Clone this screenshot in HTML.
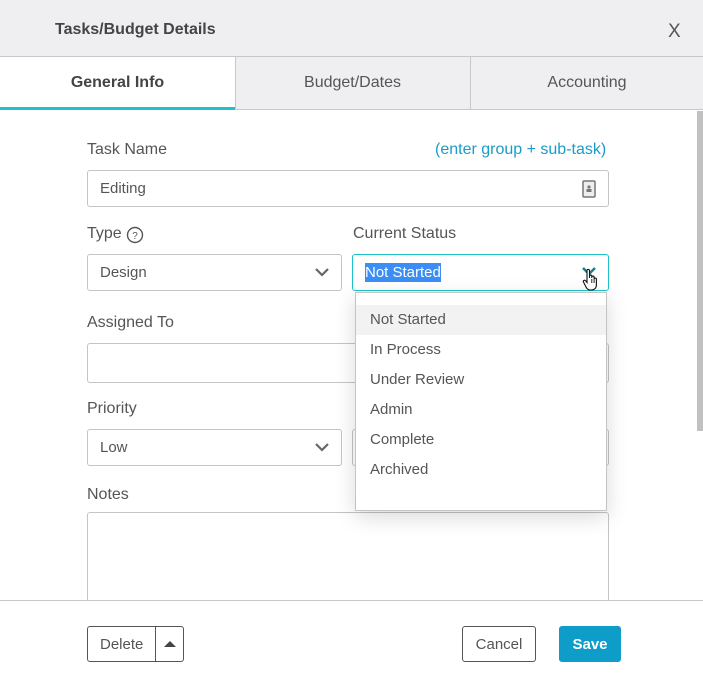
<!DOCTYPE html>
<html><head><style>
*{box-sizing:border-box;margin:0;padding:0}
body{width:703px;height:683px;position:relative;overflow:hidden;background:#fff;font-family:"Liberation Sans",sans-serif;color:#555}
.a{position:absolute}
.lbl{font-size:16px;color:#555}
.box{position:absolute;border:1px solid #c4c4c4;border-radius:3px;background:#fff;font-size:15px;color:#555;padding-left:12px;display:flex;align-items:center}
.chev{position:absolute;right:12px;top:50%;margin-top:-6px}
.item{position:absolute;left:0;width:250px;height:30px;font-size:15px;color:#555;padding-left:14px;line-height:30px}
.btn{position:absolute;border:1px solid #555;border-radius:3px;font-size:15px;color:#555;display:flex;align-items:center;justify-content:center;background:#fff}
</style></head><body>
<div class="a" style="left:0;top:0;width:703px;height:57px;background:#efeff2;border-bottom:1px solid #c8c8c8"></div>
<div class="a" style="left:55px;top:21px;font-size:16px;font-weight:bold;color:#444">Tasks/Budget Details</div>
<div class="a" style="left:668px;top:21px;font-size:19px;color:#555">X</div>
<div class="a" style="left:0;top:57px;width:235px;height:53px;background:#fff"></div>
<div class="a" style="left:0;top:107px;width:235px;height:3px;background:#1dc3c9"></div>
<div class="a" style="left:235px;top:57px;width:468px;height:53px;background:#efeff2;border-left:1px solid #c8c8c8;border-bottom:1px solid #c8c8c8"></div>
<div class="a" style="left:470px;top:57px;width:1px;height:53px;background:#c8c8c8"></div>
<div class="a" style="left:0;top:74px;width:235px;text-align:center;font-size:16px;font-weight:bold;color:#444">General Info</div>
<div class="a" style="left:235px;top:74px;width:235px;text-align:center;font-size:16px;color:#555">Budget/Dates</div>
<div class="a" style="left:471px;top:74px;width:232px;text-align:center;font-size:16px;color:#555">Accounting</div>
<div class="a" style="left:697px;top:111px;width:6px;height:320px;background:#c1c1c1"></div>

<div class="a lbl" style="left:87px;top:141px">Task Name</div>
<div class="a" style="left:435px;top:141px;font-size:16px;color:#1a9bc9">(enter group + sub-task)</div>
<div class="box" style="left:87px;top:170px;width:522px;height:37px">Editing
<svg class="a" style="right:12px;top:9px" width="14" height="18" viewBox="0 0 14 18"><rect x="1" y="1" width="12" height="16" rx="1" fill="#eee" stroke="#777" stroke-width="1.5"/><circle cx="7" cy="7" r="1.6" fill="#777"/><rect x="4.5" y="9" width="5" height="3" fill="#777"/></svg></div>

<div class="a lbl" style="left:87px;top:225px">Type</div>
<svg class="a" style="left:126px;top:226px" width="18" height="18" viewBox="0 0 18 18"><circle cx="9" cy="9" r="7.5" fill="none" stroke="#555" stroke-width="1.4"/><text x="9" y="13" font-size="10" text-anchor="middle" fill="#555" font-family="Liberation Sans">?</text></svg>
<div class="box" style="left:87px;top:254px;width:255px;height:37px">Design<svg class="chev" width="14" height="10" viewBox="0 0 14 10"><path d="M1 2l6 6 6-6" fill="none" stroke="#666" stroke-width="2.2"/></svg></div>
<div class="a lbl" style="left:353px;top:225px">Current Status</div>
<div class="box" style="left:352px;top:254px;width:257px;height:37px;border-color:#1dc3c9"><span style="background:#3a8ef6;color:#fff;padding:1px 0">Not Started</span>
<svg class="chev" width="14" height="9" viewBox="0 0 14 9"><path d="M1 1l6 6 6-6" fill="none" stroke="#1a7f8a" stroke-width="2.5"/></svg></div>
<svg class="a" style="left:582px;top:268px" width="18" height="24" viewBox="0 0 18 24"><path d="M5 2.5c0-1.5 2.5-1.5 2.5 0V10l0-2c0-1.3 2.3-1.3 2.3 0v2-1c0-1.3 2.3-1.300 2.3 0v2c0-1.3 2.3-1.3 2.3 0v6c0 3-2 5-5 5H8c-2 0-3-1-4-3L1.5 14c-.8-1.3 1-2.5 2-1.3L5 14.5z" fill="#fff" stroke="#111" stroke-width="1.1"/><path d="M9.8 11v4M12.1 11v4" stroke="#111" stroke-width=".9"/></svg>

<div class="a lbl" style="left:87px;top:314px">Assigned To</div>
<div class="box" style="left:87px;top:343px;width:522px;height:40px"></div>
<div class="a lbl" style="left:87px;top:400px">Priority</div>
<div class="box" style="left:87px;top:429px;width:255px;height:37px">Low<svg class="chev" width="14" height="10" viewBox="0 0 14 10"><path d="M1 2l6 6 6-6" fill="none" stroke="#666" stroke-width="2.2"/></svg></div>
<div class="box" style="left:352px;top:429px;width:257px;height:37px"></div>
<div class="a lbl" style="left:87px;top:486px">Notes</div>
<div class="a" style="left:87px;top:512px;width:522px;height:90px;border:1px solid #c4c4c4;border-radius:3px"></div>

<div class="a" style="left:355px;top:292px;width:252px;height:219px;background:#fff;border:1px solid #c4c4c4;box-shadow:0 6px 20px rgba(0,0,0,.15)">
<div class="item" style="top:12px;background:#f2f2f2">Not Started</div>
<div class="item" style="top:42px">In Process</div>
<div class="item" style="top:72px">Under Review</div>
<div class="item" style="top:102px">Admin</div>
<div class="item" style="top:132px">Complete</div>
<div class="item" style="top:162px">Archived</div>
</div>

<div class="a" style="left:0;top:600px;width:703px;height:83px;background:#fff;border-top:1px solid #c8c8c8"></div>
<div class="btn" style="left:87px;top:626px;width:97px;height:36px;justify-content:flex-start;padding-left:12px">Delete</div>
<div class="a" style="left:155px;top:627px;width:1px;height:34px;background:#555"></div>
<svg class="a" style="left:164px;top:640px" width="12" height="7" viewBox="0 0 12 7"><path d="M0 7L6 1 12 7z" fill="#444"/></svg>
<div class="btn" style="left:462px;top:626px;width:74px;height:36px">Cancel</div>
<div class="btn" style="left:559px;top:626px;width:62px;height:36px;background:#0e9cc8;border-color:#0e9cc8;color:#fff;font-weight:bold">Save</div>
</body></html>
